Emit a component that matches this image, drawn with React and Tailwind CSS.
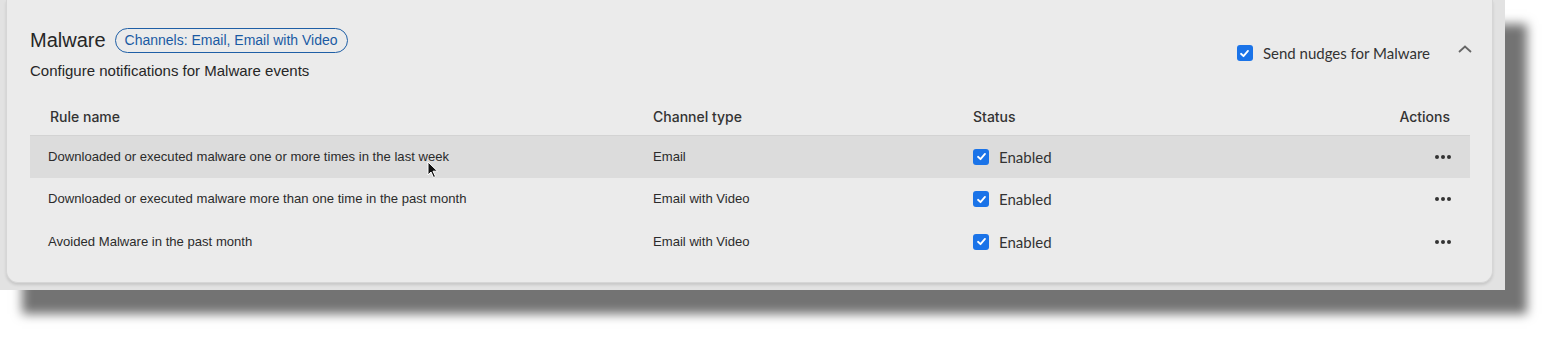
import React from "react";

const rules = [
  { name: "Downloaded or executed malware one or more times in the last week", channel: "Email", hover: true },
  { name: "Downloaded or executed malware more than one time in the past month", channel: "Email with Video" },
  { name: "Avoided Malware in the past month", channel: "Email with Video" },
];

const CheckBox = () => (
  <span className="w-4 h-4 rounded-[3px] bg-[#1a73e8] flex items-center justify-center shrink-0">
    <svg width="11" height="11" viewBox="0 0 12 12" fill="none">
      <path d="M2.2 6.3 L4.9 8.9 L9.8 3.2" stroke="white" strokeWidth="2" strokeLinecap="round" strokeLinejoin="round" />
    </svg>
  </span>
);

const Dots = () => (
  <span className="flex gap-[2px]">
    <span className="w-[4px] h-[4px] rounded-full bg-[#333]" />
    <span className="w-[4px] h-[4px] rounded-full bg-[#333]" />
    <span className="w-[4px] h-[4px] rounded-full bg-[#333]" />
  </span>
);

export default function App() {
  return (
    <div className="w-[1555px] h-[341px] bg-white" style={{ fontFamily: '"Liberation Sans", Arial, sans-serif' }}>
      <div className="w-[1505px] h-[290px] bg-[#e2e2e2] pl-[6px] pr-[12px] pb-[7px] shadow-[22px_24px_10px_rgba(0,0,0,0.55)]">
        <div className="relative h-full bg-[#ebebeb] rounded-b-[12px] border border-t-0 border-[#d6d6d6] shadow-[0_2px_3px_rgba(0,0,0,0.12)] pl-[23px] pr-[22px] pt-[28px]">
          {/* Header */}
          <div className="flex justify-between">
            <div>
              <div className="flex items-center gap-[9px]">
                <h2 className="text-[20px] leading-[25px] text-[#262626]">Malware</h2>
                <span className="border border-[#1f5fa6] rounded-full px-[9px] h-[25px] flex items-center text-[14px] text-[#1a5aa3]">
                  Channels: Email, Email with Video
                </span>
              </div>
              <p className="mt-[7px] text-[15px] text-[#262626]">Configure notifications for Malware events</p>
            </div>
            <div className="flex items-start gap-[27px] pt-[13px]">
              <label className="flex items-center gap-[10px] pt-[1px]" style={{ fontFamily: "Lato, sans-serif" }}>
                <CheckBox />
                <span className="text-[15px] text-[#333]">Send nudges for Malware</span>
              </label>
              <svg width="16" height="10" viewBox="0 0 16 10" className="mt-[3px] -mr-[3px]">
                <path d="M2 8 L8 2.5 L14 8" stroke="#666" strokeWidth="1.8" fill="none" />
              </svg>
            </div>
          </div>

          {/* Table */}
          <div className="mt-[16px] w-[1440px] text-[#2b2b2b]">
            <div
              className="grid grid-cols-[623px_320px_1fr_auto] h-[37px] items-center border-b border-[#d3d3d3] text-[14px] font-medium text-[#333]"
              style={{ fontFamily: "Inter, sans-serif" }}
            >
              <div className="pl-[20px]">Rule name</div>
              <div>Channel type</div>
              <div>Status</div>
              <div className="pr-[20px]">Actions</div>
            </div>
            {rules.map((r, i) => (
              <div
                key={i}
                className={`grid grid-cols-[623px_320px_1fr_auto] h-[42.5px] items-center text-[13.1px] ${r.hover ? "bg-[#dcdcdc]" : ""}`}
              >
                <div className="pl-[18px]">{r.name}</div>
                <div>{r.channel}</div>
                <div className="flex items-center gap-[10px]" style={{ fontFamily: "Lato, sans-serif" }}>
                  <CheckBox />
                  <span className="text-[15px] text-[#333]">Enabled</span>
                </div>
                <div className="pr-[19px]">
                  <Dots />
                </div>
              </div>
            ))}
          </div>

          {/* mouse cursor */}
          <svg className="absolute left-[420px] top-[161px]" width="12" height="18" viewBox="0 0 12 18">
            <path d="M1 1 L1 14 L4 11 L6.5 16.5 L8.5 15.5 L6 10.2 L10.5 10.2 Z" fill="#111" stroke="#fff" strokeWidth="1" />
          </svg>
        </div>
      </div>
    </div>
  );
}
